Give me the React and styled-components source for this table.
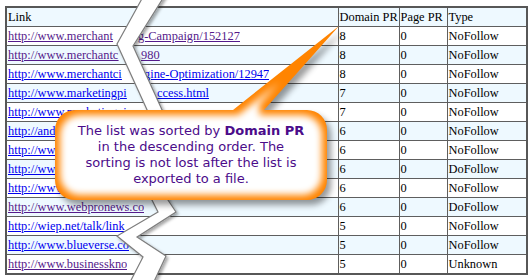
import styled, { createGlobalStyle } from 'styled-components';

const GlobalStyle = createGlobalStyle`
  html, body {
    margin: 0;
    padding: 0;
    background: #fff;
  }
  body {
    font-family: "Liberation Serif", "Times New Roman", serif;
  }
`;

// visible pieces of each url; `cut` is where the text resumes after the tear
const LINKS = [
  { head: 'http://www.merchant', cut: 130, tail: 'g-Campaign/152127', visited: true, domain: 8, type: 'NoFollow' },
  { head: 'http://www.merchantc', cut: 133, tail: '980', visited: true, domain: 8, type: 'NoFollow' },
  { head: 'http://www.merchantci', cut: 136, tail: 'gine-Optimization/12947', domain: 8, type: 'NoFollow' },
  { head: 'http://www.marketingpi', cut: 149, tail: 'ccess.html', domain: 7, type: 'NoFollow' },
  { head: 'http://www.marketingpi', domain: 7, type: 'NoFollow' },
  { head: 'http://and', domain: 6, type: 'NoFollow' },
  { head: 'http://www', domain: 6, type: 'NoFollow' },
  { head: 'http://www', domain: 6, type: 'DoFollow' },
  { head: 'http://www', domain: 6, type: 'NoFollow' },
  { head: 'http://www.webpronews.co', visited: true, domain: 6, type: 'DoFollow' },
  { head: 'http://wiep.net/talk/link', domain: 5, type: 'NoFollow' },
  { head: 'http://www.blueverse.co', domain: 5, type: 'NoFollow' },
  { head: 'http://www.businesskno', visited: true, domain: 5, type: 'Unknown' }
];

const TEAR_POINTS = [
  [144, -5], [117, 44], [148, 112], [152, 200], [158, 212], [117, 236], [143, 257], [126, 290],
  [150, 290], [166, 256], [137, 237], [176, 212], [168, 200], [163, 112], [133, 46], [165, -5]
];

const CALLOUT_PATH =
  'M20,0 L178,0 L284,-84 L209,0 L252,0 A20,20 0 0 1 272,20 L272,70 A20,20 0 0 1 252,90 ' +
  'L20,90 A20,20 0 0 1 0,70 L0,20 A20,20 0 0 1 20,0 Z';

function Tear() {
  const pts = TEAR_POINTS.map((p) => p.join(',')).join(' ');
  return (
    <TearLayer viewBox="0 0 530 280" width="530" height="280">
      <defs>
        <filter id="tearShadow" x="-20%" y="-20%" width="140%" height="140%">
          <feDropShadow dx="2" dy="2" stdDeviation="1.5" floodColor="#000" floodOpacity="0.35" />
        </filter>
      </defs>
      <polygon points={pts} fill="#fff" stroke="#7d7d7d" strokeWidth="1.2" filter="url(#tearShadow)" />
    </TearLayer>
  );
}

function Callout() {
  return (
    <CalloutBox>
      <CalloutShape width="272" height="90">
        <defs>
          <filter id="calloutShadow" filterUnits="userSpaceOnUse" x="-30" y="-110" width="340" height="230">
            <feGaussianBlur stdDeviation="3" />
          </filter>
          <filter id="calloutGlow" filterUnits="userSpaceOnUse" x="-30" y="-110" width="340" height="230">
            <feMorphology operator="erode" radius="5" />
            <feGaussianBlur stdDeviation="3.5" />
          </filter>
          <clipPath id="calloutClip">
            <path d={CALLOUT_PATH} />
          </clipPath>
        </defs>
        <path d={CALLOUT_PATH} fill="#000" opacity="0.4" transform="translate(4,5)" filter="url(#calloutShadow)" />
        <path d={CALLOUT_PATH} fill="#ff8400" />
        <g clipPath="url(#calloutClip)">
          <path d={CALLOUT_PATH} fill="#fff" filter="url(#calloutGlow)" />
        </g>
      </CalloutShape>
      <CalloutText>
        The list was sorted by <strong>Domain PR</strong>
        <br />
        in the descending order. The
        <br />
        sorting is not lost after the list is
        <br />
        exported to a file.
      </CalloutText>
    </CalloutBox>
  );
}

function LinkCell({ head, cut, tail, visited }) {
  return (
    <Cell>
      <UrlLink href="#" $visited={visited}>
        <UrlPiece $w={tail ? cut : null}>{head}</UrlPiece>
        {tail && <UrlPiece>{tail}</UrlPiece>}
      </UrlLink>
    </Cell>
  );
}

export default function App() {
  return (
    <Page>
      <GlobalStyle />
      <Table>
        <colgroup>
          <col style={{ width: 332 }} />
          <col style={{ width: 61 }} />
          <col style={{ width: 48 }} />
          <col />
        </colgroup>
        <thead>
          <Row $shade>
            <HeadCell>Link</HeadCell>
            <HeadCell>Domain PR</HeadCell>
            <HeadCell>Page PR</HeadCell>
            <HeadCell>Type</HeadCell>
          </Row>
        </thead>
        <tbody>
          {LINKS.map((link, i) => (
            <Row key={i} $shade={i % 2 === 1}>
              <LinkCell {...link} />
              <Cell>{link.domain}</Cell>
              <Cell>0</Cell>
              <Cell>{link.type}</Cell>
            </Row>
          ))}
        </tbody>
      </Table>
      <Tear />
      <Callout />
    </Page>
  );
}

const Page = styled.div`
  position: relative;
  width: 530px;
  height: 280px;
  padding: 6px 2px 0 5px;
  box-sizing: border-box;
  overflow: hidden;
  background: #fff;
`;

const Table = styled.table`
  width: 523px;
  table-layout: fixed;
  border-collapse: collapse;
  border: 2px solid #575757;
  font-size: 12.4px;
  color: #000;
`;

const Row = styled.tr`
  background: ${({ $shade }) => ($shade ? '#eef9ff' : '#fff')};
`;

const Cell = styled.td`
  height: 18px;
  padding: 0 1px;
  border: 1px solid #5e5e5e;
  line-height: 16px;
  white-space: nowrap;
  overflow: hidden;
  text-align: left;
`;

const HeadCell = styled(Cell).attrs({ as: 'th' })`
  font-weight: normal;
`;

const UrlLink = styled.a`
  display: flex;
  color: ${({ $visited }) => ($visited ? '#551a8b' : '#0000ee')};
`;

const UrlPiece = styled.span`
  flex: none;
  text-decoration: underline;
  white-space: nowrap;
  overflow: hidden;
  width: ${({ $w }) => ($w ? `${$w}px` : 'auto')};
`;

const TearLayer = styled.svg`
  position: absolute;
  left: 0;
  top: 0;
  pointer-events: none;
`;

const CalloutBox = styled.div`
  position: absolute;
  left: 55px;
  top: 110px;
  width: 272px;
  height: 90px;
  display: flex;
  align-items: center;
  justify-content: center;
`;

const CalloutShape = styled.svg`
  position: absolute;
  left: 0;
  top: 0;
  overflow: visible;
`;

const CalloutText = styled.p`
  position: relative;
  margin: 0;
  font-family: "DejaVu Sans", Verdana, sans-serif;
  font-size: 13px;
  line-height: 16px;
  text-align: center;
  color: #4b0c8a;

  strong {
    font-weight: bold;
  }
`;
